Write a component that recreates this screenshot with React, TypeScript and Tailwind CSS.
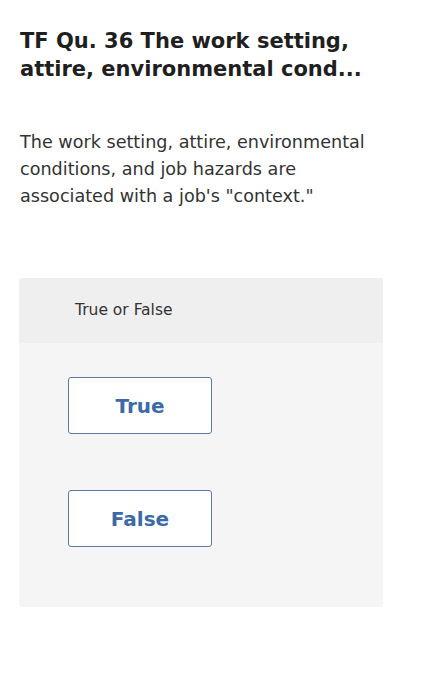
import React from "react";

const font = { fontFamily: "'DejaVu Sans', 'Open Sans', sans-serif" };

function Choice({ label }: { label: string }) {
  return (
    <button
      type="button"
      className="flex h-[57px] w-[144px] items-center justify-center rounded-[3px] border border-[#5b7ba3] bg-white text-[20px] font-bold text-[#3b6aa6]"
    >
      {label}
    </button>
  );
}

export default function App() {
  return (
    <div className="min-h-[700px] bg-white text-[#222]" style={font}>
      <div className="px-[20px] pt-[27px]">
        <h1 className="w-[370px] text-[21px] font-bold leading-[28px] text-[#1f1f1f]">
          TF Qu. 36 The work setting, attire, environmental cond...
        </h1>
        <p className="mt-[46px] w-[360px] text-[17.6px] leading-[27px] text-[#333]">
          The work setting, attire, environmental conditions, and job hazards are
          associated with a job's "context."
        </p>
      </div>
      <div className="ml-[19px] mt-[68px] w-[364px] rounded-[3px] bg-[#f5f5f5]">
        <div className="flex h-[65px] items-center rounded-t-[3px] bg-[#efefef] pl-[56px] text-[15.5px] text-[#333]">
          True or False
        </div>
        <div className="flex flex-col gap-[56px] pb-[60px] pl-[49px] pt-[34px]">
          <Choice label="True" />
          <Choice label="False" />
        </div>
      </div>
    </div>
  );
}
